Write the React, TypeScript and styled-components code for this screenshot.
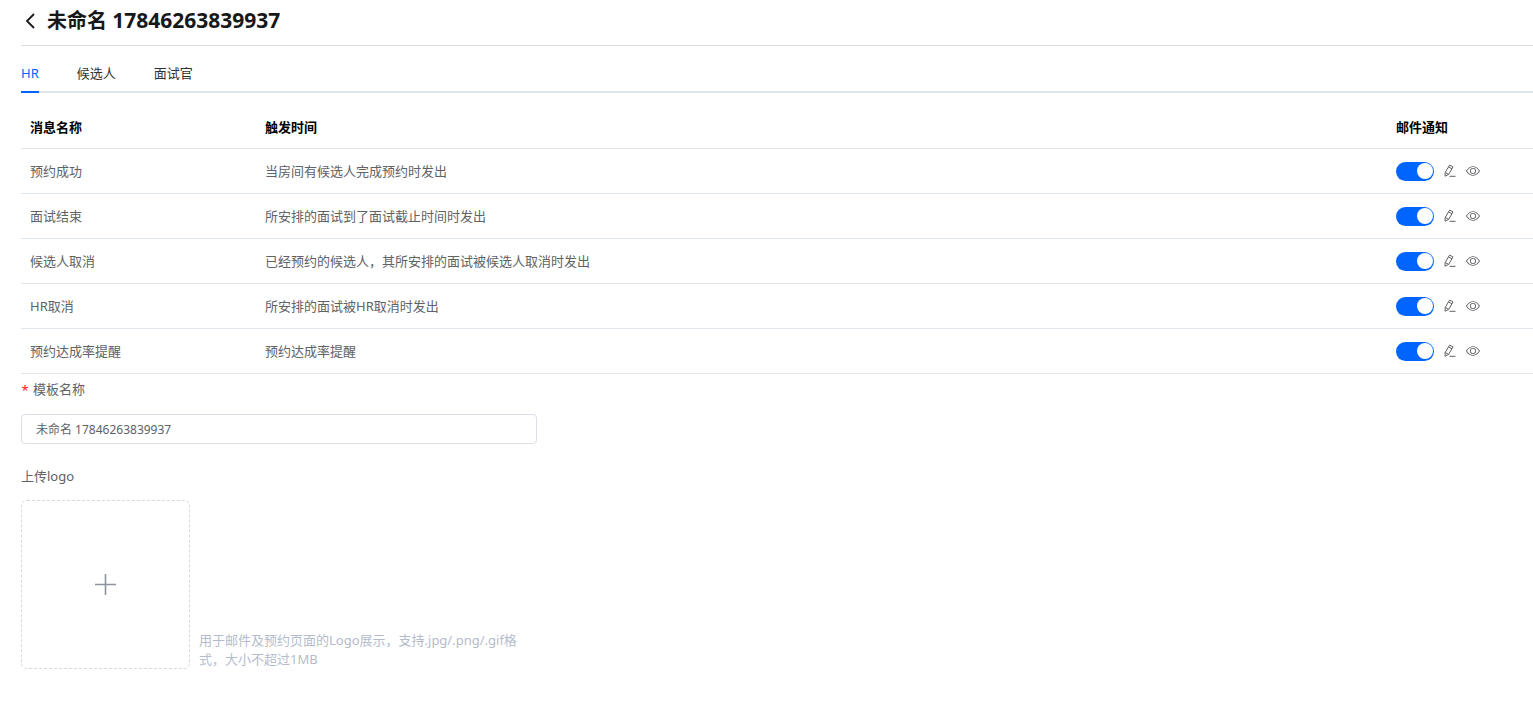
import { useState } from "react";
import styled, { createGlobalStyle } from "styled-components";

const GlobalStyle = createGlobalStyle`
  *, *::before, *::after { box-sizing: border-box; }
  body {
    margin: 0;
    background: #fff;
    color: #606266;
    font-family: "Noto Sans", "Noto Sans CJK SC", sans-serif;
    font-size: 13px;
    line-height: 20px;
  }
  button, input { font: inherit; color: inherit; }
`;

const Page = styled.main`
  padding-left: 21px;
`;

const Header = styled.header`
  display: flex;
  align-items: center;
  gap: 8px;
  height: 46px;
  padding: 0 0 4px;
  border-bottom: 1px solid #dcdee2;
`;

const PlainButton = styled.button`
  display: inline-flex;
  align-items: center;
  justify-content: center;
  padding: 0;
  border: 0;
  background: none;
  cursor: pointer;
`;

const BackButton = styled(PlainButton)`
  width: 18px;
  height: 20px;
  color: #17181a;
`;

const Title = styled.h1`
  margin: 0;
  color: #17181a;
  font-size: 20px;
  line-height: 28px;
  font-weight: 700;
`;

const TitleNumber = styled.span`
  font-size: 21px;
`;

const TabBar = styled.div`
  display: flex;
  gap: 38px;
  padding-top: 8px;
  border-bottom: 2px solid #dfe4ed;
`;

const Tab = styled.button<{ $active: boolean }>`
  height: 39px;
  margin-bottom: -2px;
  padding: 0;
  border: 0;
  border-bottom: 2px solid ${(p) => (p.$active ? "#0064ff" : "transparent")};
  background: none;
  color: ${(p) => (p.$active ? "#0064ff" : "#303133")};
  cursor: pointer;
`;

const Table = styled.table`
  width: 100%;
  margin-top: 12px;
  border-collapse: separate;
  border-spacing: 0;
  table-layout: fixed;
`;

const Column = styled.col<{ $width?: number }>`
  width: ${(p) => (p.$width ? `${p.$width}px` : "auto")};
`;

const HeadCell = styled.th`
  height: 44px;
  padding: 0 9px;
  border-bottom: 1px solid #dfe6ec;
  color: #000;
  font-weight: 700;
  text-align: left;
`;

const Cell = styled.td`
  height: 45px;
  padding: 0 9px;
  border-bottom: 1px solid #dfe6ec;
`;

const Actions = styled.div`
  display: flex;
  align-items: center;
  gap: 10px;
`;

const Switch = styled.input`
  appearance: none;
  display: flex;
  align-items: center;
  width: 38px;
  height: 19px;
  margin: 0;
  padding: 0 1px;
  border-radius: 10px;
  background: #c0c4cc;
  cursor: pointer;

  &::before {
    content: "";
    width: 16px;
    height: 16px;
    border-radius: 50%;
    background: #fff;
  }
  &:checked {
    justify-content: flex-end;
    background: #0064ff;
  }
`;

const Form = styled.form`
  display: flex;
  flex-direction: column;
  align-items: flex-start;
  width: 516px;
  max-width: 100%;
  padding: 5px 0 32px;
`;

const Label = styled.label`
  display: flex;
  gap: 4px;
`;

const Required = styled.span`
  width: 8px;
  padding-top: 1px;
  color: #ff2020;
  text-align: center;
`;

const TextInput = styled.input`
  width: 100%;
  height: 30px;
  margin: 14px 0 22px;
  padding: 0 14px;
  border: 1px solid #dcdfe6;
  border-radius: 4px;
  background: #fff;
  font-size: 12px;
`;

const UploadRow = styled.div`
  display: flex;
  align-items: flex-end;
  gap: 9px;
  margin-top: 14px;
`;

const UploadButton = styled(PlainButton)`
  flex: none;
  width: 169px;
  height: 169px;
  border: 1px dashed #d9d9d9;
  border-radius: 6px;
  color: #8c939d;
`;

const Hint = styled.p`
  margin: 0;
  color: #b4bccc;
  line-height: 19px;
`;

const BackIcon = () => (
  <svg width="18" height="20" viewBox="0 0 18 20" fill="none" stroke="currentColor" strokeWidth="1.8" aria-hidden="true">
    <path d="M13 3L6 10l7 7" />
  </svg>
);

const EditIcon = () => (
  <svg width="12" height="14" viewBox="0 0 12 14" fill="none" stroke="currentColor" strokeWidth="1" strokeLinejoin="round" aria-hidden="true">
    <path d="M5.6 1.1L9 2.9 4.7 10.4 1 12.2 1.2 8.5zM4.6 3l3.4 1.8M1.2 8.5l3.5 1.9M5.5 12.3H11.5" />
  </svg>
);

const EyeIcon = () => (
  <svg width="14" height="14" viewBox="0 0 1024 1024" fill="currentColor" aria-hidden="true">
    <path d="M512 160c320 0 512 352 512 352S832 864 512 864 0 512 0 512s192-352 512-352m0 64c-225.28 0-384.128 208.064-436.8 288 52.608 79.872 211.456 288 436.8 288 225.28 0 384.128-208.064 436.8-288-52.608-79.872-211.456-288-436.8-288m0 64a224 224 0 1 1 0 448 224 224 0 0 1 0-448m0 64a160.192 160.192 0 0 0-160 160c0 88.192 71.744 160 160 160s160-71.808 160-160-71.744-160-160-160" />
  </svg>
);

const PlusIcon = () => (
  <svg width="23" height="23" viewBox="0 0 23 23" stroke="currentColor" strokeWidth="1.6" aria-hidden="true">
    <path d="M1 11.5h21M11.5 1v21" />
  </svg>
);

const tabs = ["HR", "候选人", "面试官"];

const messages = [
  { name: "预约成功", trigger: "当房间有候选人完成预约时发出" },
  { name: "面试结束", trigger: "所安排的面试到了面试截止时间时发出" },
  { name: "候选人取消", trigger: "已经预约的候选人，其所安排的面试被候选人取消时发出" },
  { name: "HR取消", trigger: "所安排的面试被HR取消时发出" },
  { name: "预约达成率提醒", trigger: "预约达成率提醒" },
];

export default function App() {
  const [activeTab, setActiveTab] = useState("HR");

  return (
    <Page lang="zh-CN">
      <GlobalStyle />
      <Header>
        <BackButton type="button" aria-label="返回">
          <BackIcon />
        </BackButton>
        <Title>
          未命名 <TitleNumber>17846263839937</TitleNumber>
        </Title>
      </Header>

      <TabBar role="tablist">
        {tabs.map((tab) => (
          <Tab
            key={tab}
            type="button"
            role="tab"
            aria-selected={tab === activeTab}
            $active={tab === activeTab}
            onClick={() => setActiveTab(tab)}
          >
            {tab}
          </Tab>
        ))}
      </TabBar>

      <Table>
        <colgroup>
          <Column $width={235} />
          <Column />
          <Column $width={146} />
        </colgroup>
        <thead>
          <tr>
            <HeadCell scope="col">消息名称</HeadCell>
            <HeadCell scope="col">触发时间</HeadCell>
            <HeadCell scope="col">邮件通知</HeadCell>
          </tr>
        </thead>
        <tbody>
          {messages.map(({ name, trigger }) => (
            <tr key={name}>
              <Cell>{name}</Cell>
              <Cell>{trigger}</Cell>
              <Cell>
                <Actions>
                  <Switch type="checkbox" role="switch" defaultChecked aria-label={`${name}邮件通知`} />
                  <PlainButton type="button" aria-label={`编辑${name}`}>
                    <EditIcon />
                  </PlainButton>
                  <PlainButton type="button" aria-label={`预览${name}`}>
                    <EyeIcon />
                  </PlainButton>
                </Actions>
              </Cell>
            </tr>
          ))}
        </tbody>
      </Table>

      <Form>
        <Label htmlFor="template-name">
          <Required aria-hidden="true">*</Required>
          模板名称
        </Label>
        <TextInput id="template-name" type="text" required defaultValue="未命名 17846263839937" />
        <Label htmlFor="logo-upload">上传logo</Label>
        <UploadRow>
          <UploadButton id="logo-upload" type="button">
            <PlusIcon />
          </UploadButton>
          <Hint>用于邮件及预约页面的Logo展示，支持.jpg/.png/.gif格式，大小不超过1MB</Hint>
        </UploadRow>
      </Form>
    </Page>
  );
}
